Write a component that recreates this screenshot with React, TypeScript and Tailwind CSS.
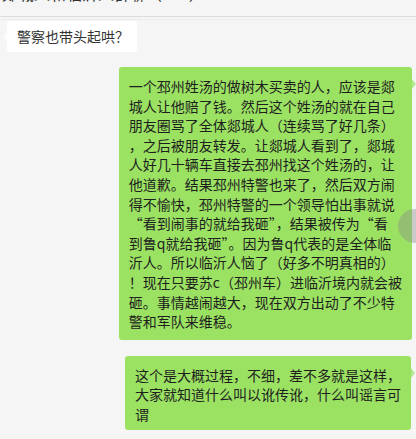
const longLines = [
  "一个邳州姓汤的做树木买卖的人，应该是郯",
  "城人让他赔了钱。然后这个姓汤的就在自己",
  "朋友圈骂了全体郯城人（连续骂了好几条）",
  "，之后被朋友转发。让郯城人看到了，郯城",
  "人好几十辆车直接去邳州找这个姓汤的，让",
  "他道歉。结果邳州特警也来了，然后双方闹",
  "得不愉快，邳州特警的一个领导怕出事就说",
  "“看到闹事的就给我砸”，结果被传为“看",
  "到鲁q就给我砸”。因为鲁q代表的是全体临",
  "沂人。所以临沂人恼了（好多不明真相的）",
  "！现在只要苏c（邳州车）进临沂境内就会被",
  "砸。事情越闹越大，现在双方出动了不少特",
  "警和军队来维稳。",
];

const shortLines = [
  "这个是大概过程，不细，差不多就是这样，",
  "大家就知道什么叫以讹传讹，什么叫谣言可",
  "谓",
];

function GreenBubble({ lines, className }: { lines: string[]; className: string }) {
  return (
    <div className={`relative bg-[#9be263] rounded-[3px] pl-[10px] pr-[10px] ${className}`}>
      {lines.map((l, i) => (
        <div key={i} className="whitespace-nowrap leading-[19.6px]">
          {l}
        </div>
      ))}
      {/* tail */}
      <div className="absolute right-[-4px] top-[12px] w-0 h-0 border-y-[5px] border-y-transparent border-l-[4px] border-l-[#b5e892]" />
    </div>
  );
}

export default function App() {
  return (
    <div
      className="relative flex flex-col w-[416px] h-[439px] overflow-hidden bg-[#f5f5f5] text-[14px] text-[#1e1e1e]"
      style={{ fontFamily: '"Noto Sans CJK SC", "Noto Sans", sans-serif' }}
    >
      {/* title bar, scrolled mostly out of view */}
      <div className="h-[17px] shrink-0 overflow-hidden border-b border-[#dcdcdc]">
        <div className="-mt-[15px] pl-[2px] text-[16px] leading-[16px] text-[#333] whitespace-nowrap">
          郯城人和临沂人群聊（146）
        </div>
      </div>
      <div className="h-[3px] shrink-0 border-b border-[#ececec]" />

      <div className="flex flex-col items-start pl-[7px] pt-[1px]">
        <div className="relative bg-white rounded-[3px] pl-[10px] pr-[8px] py-[5px] leading-[21px] text-[#333]">
          警察也带头起哄？
          <div className="absolute left-[-4px] top-[11px] w-0 h-0 border-y-[5px] border-y-transparent border-r-[4px] border-r-[#fbfbfb]" />
        </div>
      </div>

      <div className="flex flex-col items-end gap-[16px] pt-[15px] pr-[4px]">
        <GreenBubble lines={longLines} className="pt-[10px] pb-[8px]" />
        <GreenBubble lines={shortLines} className="mr-[1px] pt-[10px] pb-[5px]" />
      </div>

      {/* floating translucent button at the screen edge */}
      <div className="absolute left-[398px] top-[209px] w-[34px] h-[34px] rounded-full bg-[#8a8a8a]/40" />
    </div>
  );
}
